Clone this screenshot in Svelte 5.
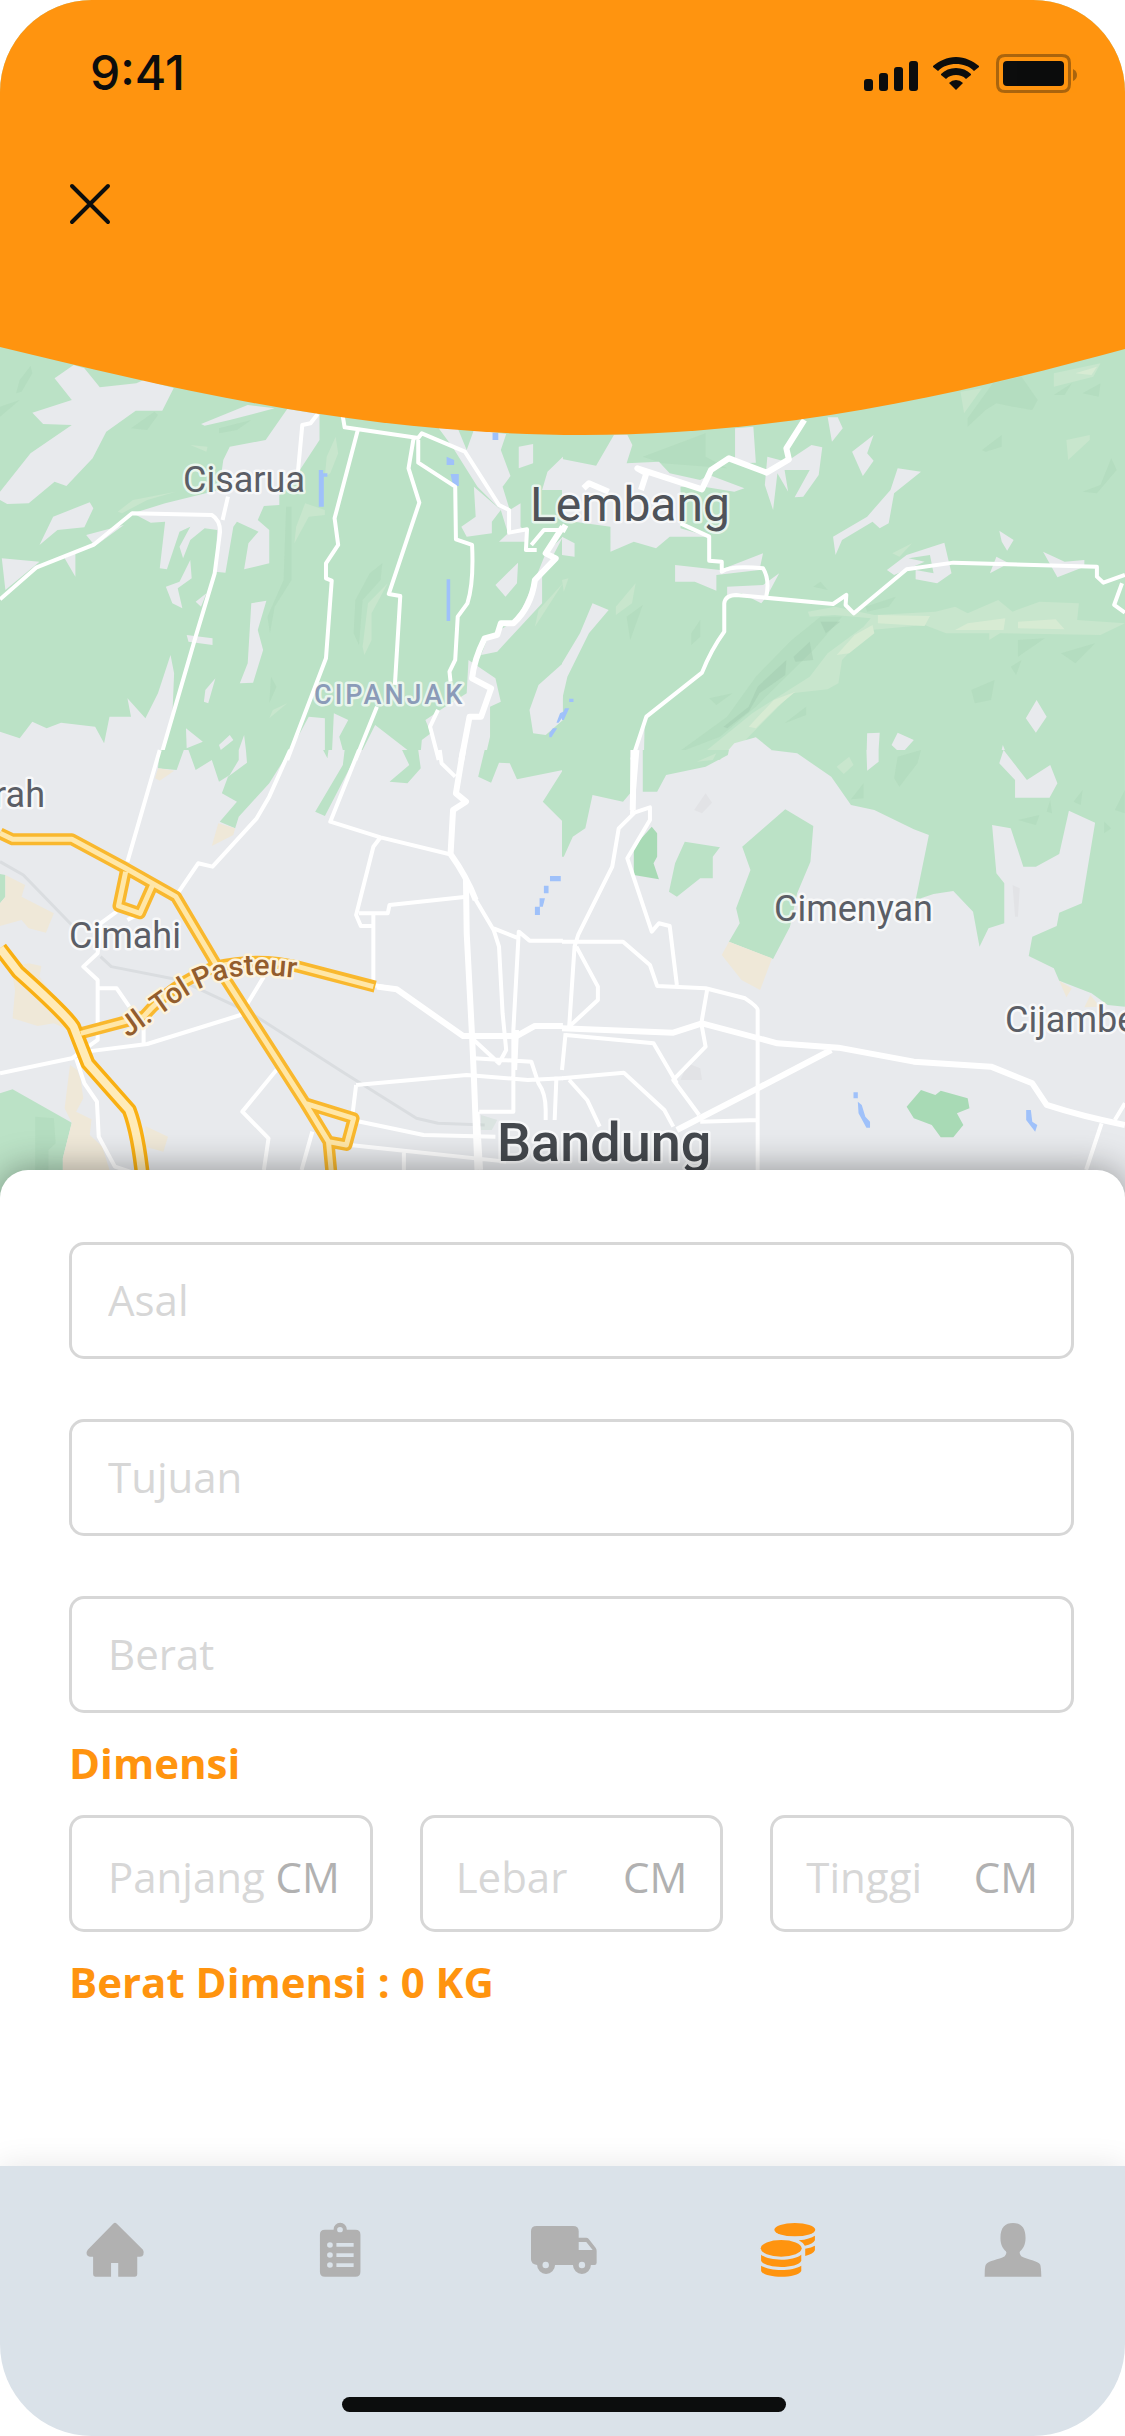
<script>
  let asal = $state('');
  let tujuan = $state('');
  let berat = $state('');
  let panjang = $state('');
  let lebar = $state('');
  let tinggi = $state('');

  // Volumetric weight: cubic centimetres divided by 6000
  const beratDimensi = $derived(
    Math.ceil(((Number(panjang) || 0) * (Number(lebar) || 0) * (Number(tinggi) || 0)) / 6000)
  );
</script>

<div class="screen">
  <section class="hero">
    <svg class="map" viewBox="0 0 1125 1200" role="img" aria-label="Peta Bandung">
      <rect class="land" width="1125" height="1200" />
      <rect class="green" width="1125" height="750" />

      <!-- north-west quarter -->
      <g transform="translate(0 340) scale(.359 .3333)">
        <path class="shade" d="M85 78L90 100L60 155L45 160L55 120zM0 200L55 180L0 230zM365 265L430 215L440 225L410 270zM610 265L700 240L660 270L610 280zM797 500L812 500L812 720L765 800L752 880L745 830L790 720zM1065 670L1060 720L1010 780L1000 915L985 880L990 780L1030 700zM755 1010L770 1040L750 1090z" />
        <path class="light" d="M328 515L370 480L490 455L410 480L340 520zM935 290L942 340L920 400L905 410L910 350zM850 490L905 510L905 525L860 530L820 610L825 560zM1080 730L1035 820L1035 900L1015 945L1010 920L1025 790zM800 1090L750 1135L760 1110zM530 315L578 320L575 335zM1568 730L1490 860L1500 810z" />
        <path class="land" d="M205 75L235 85L278 142L380 130L400 120L484 144L452 212H378L296 275L258 355L185 438L152 425L80 490L20 492L0 480V455L85 340L200 255L120 252L90 218L200 180L152 115z" />
        <path class="land" d="M560 252L690 195L765 205L640 240L570 257zM800 207L890 222V300L832 395L830 420L778 465V495L735 498L718 540L750 570V670L680 688L692 610L720 575L660 545L650 560L628 698L600 695L605 570L570 565L530 600L510 655L500 620L530 560L500 575L465 688L445 685L460 545L420 548L370 520L460 490L610 450L622 360L640 320L740 300z" />
        <path class="land" d="M148 530L250 487L260 505L235 562L160 570L110 615zM240 585L345 555L265 618zM5 655L110 665L15 750zM180 655L210 640V710zM530 660L534 715L495 745L508 805L480 790L462 740L500 725zM575 760L560 800L545 785zM700 790L742 782L718 870L733 930L705 1028L668 1030L690 970zM520 885L592 895V915L525 905zM600 1015L580 1090L568 1085L572 1050zM1222 265H1275L1300 330L1320 270L1410 282L1395 330L1422 408L1400 440L1420 510L1450 490V560L1465 575V605H1390L1415 580L1395 510L1330 440L1260 320zM1320 440L1395 510L1370 545V580L1300 590L1285 560L1325 530zM1445 320L1485 312V370L1445 385zM1568 350V450H1510L1525 395zM1443 668L1440 730L1408 770L1380 735zM1568 590L1510 710V790L1385 935L1340 945L1360 890L1440 840L1490 720L1520 640z" />
        <path class="land" d="M1568 970V1140L1520 1185L1485 1180L1475 1110L1500 1035zM1305 960L1380 1015L1395 1085L1365 1100V1190L1350 1260H1170L1175 1200L1200 1180L1185 1140L1240 1100L1300 1060zM0 1175L55 1195L90 1145L130 1165L170 1148L265 1160L290 1210L305 1130H365L355 1075L405 1135L440 1060L475 945L485 1000L480 1130L450 1230H0zM860 1130L905 1135V1230H810zM930 1120L970 1140L945 1190L955 1230H925zM1045 1155L1135 1230H1010zM518 1165L565 1205L520 1225zM640 1185L650 1200L615 1230L610 1215zM680 1185L685 1230H665z" />
        <path class="water" d="M888 390H900V400H912V410H902V500H888zM1244 718H1254V843H1244zM1372 278H1388V300H1372zM1244 350L1265 360V375H1244zM1255 402H1278V438H1262zM1560 1120L1568 1115V1130L1556 1148H1550zM1540 1165H1552L1536 1192H1530V1180z" />
        <g class="road">
          <path d="M0 778L102 682L260 615L368 520L590 525Q613 540 613 575L598 700L545 890L445 1260M635 470L620 540M830 395L842 255L865 250L885 222" />
          <path d="M955 230L960 262L1165 294L1175 280L1295 335L1390 495L1418 510V578L1468 568L1465 630H1495M998 265L932 535L942 615L908 670V715L924 722L908 955L800 1260M1152 295L1138 385L1168 488L1083 762L1115 768L1100 1035M1165 300V368L1268 440L1270 598L1315 615Q1320 730 1302 790L1275 830L1268 960L1252 995L1255 1025M1050 1100L990 1260M1220 1110L1198 1160L1222 1260M1480 615L1515 570H1560" />
        </g>
        <path class="road major" d="M1568 560L1520 640L1548 655L1490 720Q1480 800 1430 850L1395 850L1385 885L1350 895Q1320 960 1315 1015L1368 1045L1340 1130H1308L1285 1260" />
      </g>

      <!-- north-east quarter -->
      <g transform="translate(562 340) scale(.359 .3333)">
        <path class="shade" d="M1280 110L1325 180L1310 210L1255 200L1210 190L1180 210L1130 260L1130 235L1200 130zM1370 165L1420 130L1400 165zM1450 160L1500 130L1495 170zM225 350L400 280V350L460 385L280 370zM1170 330L1225 285V320L1180 335zM1530 355L1545 390L1490 460L1450 455L1500 435zM180 830L225 795L190 900zM360 880L385 840V890L360 915zM410 1075L475 1060L430 1095zM620 1150L680 1100V1125zM1270 900L1345 895L1270 950zM1390 940L1485 910L1430 970zM1250 980L1280 960L1265 1005zM1140 1050L1205 1020L1195 1080L1150 1090zM700 740L720 725L740 750zM845 800L930 770L910 800L850 815zM320 1240L460 1130L540 1010L640 900L720 830H780L700 930L540 1100L440 1190z" />
        <path class="light" d="M1370 100L1500 70L1480 110L1370 140zM1110 155L1170 145L1120 220zM1405 300L1470 285V300L1410 360zM205 730L195 790L150 825L150 800zM920 640L975 610L940 650zM0 720L18 715L5 755z" />
        <path class="deep" d="M720 845H775L735 880zM690 905L700 960L650 965L645 950zM625 960L622 1005L550 1060L520 1115L460 1165L450 1160L520 1100L545 1040z" />
        <path class="light" d="M685 815L760 800L870 825L1040 815L1095 800L1130 820L1215 780L1255 815L1330 785L1440 790L1435 840L1568 850L1500 885L1220 880L1190 900V880H1070L1010 855L860 870L780 960L770 1030L740 1048L640 1060L520 1190L460 1260H370L530 1120L690 1010L740 940L840 860L860 835L760 825L690 830z" />
        <path class="sand-green" d="M880 825L1025 828L1010 858L880 850zM865 855L870 880L800 940L765 945L815 885zM650 1055L600 1100L540 1165L520 1160L590 1080zM1130 850L1235 835L1230 870H1095zM1270 845L1375 838L1400 868L1270 865zM1430 100L1490 80L1475 105z" />
        <path class="land" d="M145 284H182L196 315L180 370L270 365L300 400L385 420L410 405L508 445L480 455L395 440L330 440L330 565L410 590L330 590L300 590L262 625L200 605L135 635V560L0 540V357L95 377zM482 265L533 260L540 368L482 370zM740 232H768L782 265L752 305zM572 350L625 365L695 315L725 322L715 405L672 470L648 472L690 390H620L630 455L600 400L588 510L565 435zM868 285L850 340L868 362L838 408L808 335zM935 385L1000 395L925 460L910 550L885 565L865 545L780 600L762 645L755 590L850 530L915 450z" />
        <path class="land" d="M1218 572L1258 600L1240 632L1225 605zM315 675L440 690L560 640L550 690L430 705V752L370 725H315zM460 740L560 735L605 700L570 770L555 790L500 760L460 765zM905 690L960 645L1065 608L1085 700L1045 730L985 718V690L1035 700L1025 645L965 655L1010 665L925 705zM1340 635L1400 665L1455 660V680L1380 712zM1210 650L1245 670L1192 700zM85 790L130 810L75 880L15 1010L0 1080V970L50 880zM1322 1080L1350 1130L1320 1178L1292 1135zM850 1180L885 1178L880 1260H848zM935 1178L980 1200L945 1242L918 1215zM480 1210L540 1192L590 1235L655 1238L680 1260H440zM1228 1215L1245 1260H1218zM0 590L35 610V650L0 645zM230 1160L228 1260H195z" />
        <path class="water" d="M0 1125L8 1105H20L5 1140H0zM20 1076H32V1086H20z" />
        <g class="road">
          <path d="M330 550L410 590V662L445 665V695Q470 675 560 685Q580 720 568 775M195 1260L235 1130L390 998Q415 930 452 875V790Q455 765 485 765L755 792L792 765L790 795L813 820L960 688L1090 668L1490 680V710L1508 728L1568 705M1560 730L1538 795L1568 818" />
        </g>
        <path class="road major" d="M0 575L10 555M60 445L75 430L130 455M220 450L235 400L210 385L390 448L415 390L465 355L570 398L632 358L625 325L675 240" />
      </g>

      <!-- south-west quarter -->
      <g transform="translate(0 750) scale(.359 .3333)">
        <path class="green" d="M445 0H512L492 60L440 55zM525 0H665V30L640 75L610 95L590 30L545 60zM685 0H808L750 100L665 200L655 235L612 215L660 155L618 130L635 80L688 38zM900 0H915L912 25zM960 0H1000L905 198L878 185L955 45zM1120 0H1165L1172 55L1135 100L1085 95L1140 45zM1350 0H1568V60L1440 88L1420 40L1390 38L1368 98L1332 80zM1568 60V215L1512 155zM0 372L15 375V440L0 460zM0 1030L35 1018L200 1118L175 1225V1350H0z" />
        <path class="sand" d="M440 55L485 62L445 92L432 85zM608 220L655 235L650 255L590 288zM15 375L70 405L60 440L150 490L128 548L80 535L60 510L0 528V460L15 440zM30 650L80 640L115 648L110 680L190 800L180 835L150 820L105 828L35 805L42 720zM195 945L215 960L225 990L232 1045L212 1085L255 1108L250 1155L285 1190L305 1260L250 1350H175V1225L200 1118L180 1075zM405 1128L468 1160L455 1205L405 1190z" />
        <path class="rail" d="M0 335L65 375L200 525M280 620L310 650L500 690L700 790L960 970L1160 1105L1220 1120L1350 1125" />
        <path class="shade" d="M98 1100L150 1105L155 1180L135 1200V1260H98zM1340 1095L1385 1110L1370 1140H1340z" />
        <g class="road">
          <path d="M445 0L355 335M808 0L750 140L715 205L592 350L552 340L495 430M1000 0L920 215L1060 262L1250 312M1060 262L1040 290L992 495L1005 528H1040V490L1000 490M1030 490H1080L1085 465L1300 440M1040 520V705L1105 718" />
          <path d="M325 485L280 520L272 610L232 650L272 690V870L200 925L0 970M275 715H325L360 770M240 905L410 882L670 795L735 680M400 880V820M212 925L235 1000L270 1055L275 1160L320 1250L390 1275M770 960L675 1085L748 1165L735 1260M355 510L390 490M1225 0L1230 40L1268 80M992 1005L1300 975L1470 990L1568 985M992 1005L980 1110L1180 1155L1380 1160M870 1145L840 1260M975 1185L1410 1235M1125 1205V1270M1320 925L1480 935L1500 1000Q1520 1030 1520 1080V1110M1335 1085H1430V840L1445 545L1475 572H1568M1320 870L1390 940L1410 900L1400 790L1390 590L1375 540L1320 440M1375 535L1445 565M1440 840L1435 960M1330 1085L1340 1260M1545 1110L1550 980" />
        </g>
        <path class="road major" d="M1290 0L1270 130L1298 155L1262 180L1255 312Q1300 380 1325 450M1298 390L1300 550L1315 860L1320 980L1330 1260M1050 710L1105 718L1290 858H1440L1490 828H1568" />
        <g class="toll-edge">
          <path d="M0 250L35 268H200L345 352L490 440L600 640L850 1060L985 1105L965 1185L915 1175L850 1060M350 365L330 468L390 490L425 405M915 1175L925 1290M225 850L400 800Q480 700 600 650Q720 620 830 650L1045 710" />
          <path class="wide" d="M0 595L50 665Q180 790 205 830L245 940L360 1080Q385 1150 398 1290" />
        </g>
        <g class="toll">
          <path d="M0 250L35 268H200L345 352L490 440L600 640L850 1060L985 1105L965 1185L915 1175L850 1060M350 365L330 468L390 490L425 405M915 1175L925 1290M225 850L400 800Q480 700 600 650Q720 620 830 650L1040 710" />
          <path class="wide" d="M0 595L50 665Q180 790 205 830L245 940L360 1080Q385 1150 398 1290" />
        </g>
        <path class="water" d="M1532 378H1562V394H1532zM1515 407H1528V430H1515zM1503 445H1518L1512 470H1503zM1490 470H1504V495H1490z" />
      </g>

      <!-- south-east quarter -->
      <g transform="translate(562 750) scale(.359 .3333)">
        <path class="green" d="M0 0H190V130L170 155L85 135L65 235L30 260L5 320H0zM225 0H465L462 15L400 50L290 75L265 125H225zM580 0H1568V770L1520 765L1475 730L1385 692L1370 655L1300 618L1310 560L1378 528L1385 488L1448 460L1485 218L1412 182L1385 312L1320 350H1285L1250 235L1198 225L1210 370L1232 400V520L1188 535L1163 590L1145 485L1090 423L1035 432L985 450L1022 255L980 238L870 180L805 165L750 80L655 10zM622 178L700 228L692 335L655 430L635 530L588 627L465 575L495 520L485 475L525 360L502 290zM342 275L440 292L420 320V385L385 385L320 440L298 425L315 340z" />
        <path class="park" d="M250 230L265 250V320L255 340L270 388L200 375V290zM960 1070L1000 1020L1040 1035L1055 1022L1130 1045L1135 1075L1100 1090L1118 1125L1090 1162H1055L1030 1125L980 1105z" />
        <path class="land" d="M848 0H882V35L850 62zM1230 0L1295 90L1360 45L1380 100L1358 143H1262V90L1218 40z" />
        <path class="sand" d="M465 575L585 625L552 720L500 690L445 615zM1385 692L1420 715L1405 742zM1472 735L1498 770L1455 772z" />
        <path class="shade" d="M935 20L1000 0L990 40L940 110L925 85zM840 100V145L805 148zM1450 120L1445 165L1425 155zM1360 150L1365 190L1350 185zM1270 210L1330 195L1320 225zM1540 180L1568 120V190zM1510 215L1530 235L1510 250z" />
        <path class="light" d="M800 20L812 45L785 72L765 50zM430 10L420 30L375 35z" />
        <path class="built" d="M400 130L418 158L390 190L368 180zM350 940L385 955L390 990H330zM1255 405L1275 415L1270 500H1262z" />
        <g class="road">
          <path d="M210 0L195 190L245 172V210L182 325L250 545L270 520L300 528L320 705M205 185L158 235L140 350L45 555L35 590L20 830M0 575H170L245 645L265 708L400 715L510 745Q545 770 545 780V1260M40 590L100 710V750L20 830M405 715L388 820L400 890L310 990L382 1095M10 855L255 880L320 1000M0 985L172 968L285 1080L310 1130M20 990L70 1050L105 1130M385 1115L545 1110M1568 1060L1540 1110M1503 1120L1460 1260M10 850L0 960" />
        </g>
        <path class="road major" d="M200 0L197 180M0 835L310 848L390 820L600 880L770 893L980 935L1195 950L1310 1000L1350 1065Q1450 1100 1568 1125M750 900L545 1015L320 1140" />
        <path class="water" d="M812 1027H824V1045H812zM824 1055L835 1065L845 1100L858 1115V1133H848L826 1090zM1293 1080H1306L1310 1115L1324 1125L1318 1145L1293 1110z" />
      </g>

      <text class="town" x="183" y="492">Cisarua</text>
      <text class="city" x="530" y="521">Lembang</text>
      <text class="district" x="314" y="704">CIPANJAK</text>
      <text class="town" x="45" y="807" text-anchor="end">rah</text>
      <text class="town" x="69" y="948">Cimahi</text>
      <text class="town" x="774" y="921">Cimenyan</text>
      <text class="town" x="1005" y="1032">Cijambe</text>
      <text class="capital" x="497" y="1161">Bandung</text>
      <path id="tol-pasteur" fill="none" d="M128 1038L166 1011Q205 980 240 976Q265 972 340 984" />
      <text class="street"><textPath href="#tol-pasteur">Jl. Tol Pasteur</textPath></text>
    </svg>

    <svg class="curve" viewBox="0 0 1125 440" aria-hidden="true">
      <path fill="#ff940f" d="M0 0H1125V349C980 388 796 435 583 435C370 435 180 391 0 347z" />
    </svg>

    <header>
      <div class="status">
        <time>9:41</time>
        <svg width="213" height="39" viewBox="0 0 213 39" aria-hidden="true">
          <g fill="#0c0d0d">
            <rect x="0" y="25" width="9" height="12" rx="3" />
            <rect x="15" y="19" width="9" height="18" rx="3" />
            <rect x="30" y="13" width="9" height="24" rx="3" />
            <rect x="45" y="7" width="9" height="30" rx="3" />
            <path d="M92 3C101 3 109 7 115 12V13L110 17C105 12 99 10 92 10C85 10 79 12 74 17L69 13V12C75 7 83 3 92 3z" />
            <path d="M92 14C98 14 103 16 107 20V21L102 25C99 22 96 21 92 21C88 21 85 22 82 25L77 21V20C81 16 86 14 92 14z" />
            <path d="M92 26Q96 26 99 29L92 36L85 29Q88 26 92 26z" />
            <rect x="139" y="7" width="61" height="25" rx="4" />
          </g>
          <g opacity=".35">
            <path fill="#0c0d0d" fill-rule="evenodd" d="M141 0H198Q207 0 207 9V30Q207 39 198 39H141Q132 39 132 30V9Q132 0 141 0zM141 3Q135 3 135 9V30Q135 36 141 36H198Q204 36 204 30V9Q204 3 198 3z" />
            <path fill="#0c0d0d" d="M209 15Q213 17 213 21T209 27z" />
          </g>
        </svg>
      </div>
      <button class="close" type="button" aria-label="Tutup">
        <svg width="42" height="42" viewBox="0 0 42 42" fill="none" stroke="#0c0d0d" stroke-width="4" stroke-linecap="round">
          <path d="M3 3L39 39M39 3L3 39" />
        </svg>
      </button>
    </header>
  </section>

  <form class="sheet">
    <div class="fields">
      <input type="text" placeholder="Asal" aria-label="Asal" bind:value={asal} />
      <input type="text" placeholder="Tujuan" aria-label="Tujuan" bind:value={tujuan} />
      <input type="text" placeholder="Berat" aria-label="Berat" bind:value={berat} />
    </div>
    <h2>Dimensi</h2>
    <div class="dims">
      <label class="dim">
        <input type="text" inputmode="numeric" placeholder="Panjang" aria-label="Panjang" bind:value={panjang} />
        <span>CM</span>
      </label>
      <label class="dim">
        <input type="text" inputmode="numeric" placeholder="Lebar" aria-label="Lebar" bind:value={lebar} />
        <span>CM</span>
      </label>
      <label class="dim">
        <input type="text" inputmode="numeric" placeholder="Tinggi" aria-label="Tinggi" bind:value={tinggi} />
        <span>CM</span>
      </label>
    </div>
    <h2>Berat Dimensi : {beratDimensi} KG</h2>
  </form>

  <nav>
    <a href="#beranda" aria-label="Beranda">
      <svg viewBox="225 273 184 174" preserveAspectRatio="none">
        <path d="M312 281Q317 276 322 281L395 359Q399 367 396 374Q394 380 387 380H379V433Q379 440 373 440H326V399H306V440H262Q256 440 256 433V380H247Q240 380 238 373Q236 366 241 359z" />
      </svg>
    </a>
    <a href="#pesanan" aria-label="Pesanan">
      <svg viewBox="852 273 184 174" preserveAspectRatio="none">
        <path fill-rule="evenodd" d="M902 299H926A18 20 0 0 1 963 299H987Q1001 299 1001 314V425Q1001 440 987 440H902Q888 440 888 425V314Q888 299 902 299zM936 299A8 8 0 0 0 952 299A8 8 0 0 0 936 299zM908 345A8 8 0 0 0 924 345A8 8 0 0 0 908 345zM908 375A8 8 0 0 0 924 375A8 8 0 0 0 908 375zM908 405A8 8 0 0 0 924 405A8 8 0 0 0 908 405zM934 339V350H982V339zM934 370V381H982V370zM934 400V411H982V400z" />
      </svg>
    </a>
    <a href="#pengiriman" aria-label="Pengiriman">
      <svg viewBox="-86 273 184 174" preserveAspectRatio="none">
        <path fill-rule="evenodd" d="M-70 288H31Q47 288 47 304V323H68Q72 323 75 327L94 353Q97 357 97 363V398Q97 405 91 405H81A25 27 0 0 1 31 405H-19A25 27 0 0 1 -69 405Q-86 403 -86 388V304Q-86 288 -70 288zM47 336V360H86L68 336zM-54 405A9 10 0 0 0 -36 405A9 10 0 0 0 -54 405zM47 405A9 10 0 0 0 65 405A9 10 0 0 0 47 405z" />
      </svg>
    </a>
    <a class="active" href="#tarif" aria-label="Cek tarif" aria-current="page">
      <svg viewBox="540 273 184 174" preserveAspectRatio="none">
        <ellipse cx="651" cy="299" rx="57" ry="20" />
        <ellipse cx="613" cy="355" rx="57" ry="25" />
        <path d="M557 374C580 394 646 394 669 374V392C660 417 566 417 557 392zM557 407C580 424 646 424 669 407V423C660 446 566 446 557 423zM662 331Q694 327 707 317V331Q702 343 679 347Q674 338 662 331zM680 356Q698 353 707 347V361Q703 372 680 378z" />
      </svg>
    </a>
    <a href="#akun" aria-label="Akun">
      <svg viewBox="1167 273 184 174" preserveAspectRatio="none">
        <path d="M1259 279C1281 279 1294 292 1294 324C1294 344 1287 356 1279 364Q1275 369 1282 379C1300 389 1329 393 1335 404Q1337 409 1338 440H1180Q1180 409 1183 404C1190 392 1220 389 1236 379Q1243 369 1239 364C1231 356 1224 344 1224 324C1224 292 1237 279 1259 279z" />
      </svg>
    </a>
  </nav>
  <div class="home-area"><span></span></div>
</div>

<style>
  :global(body) {
    background: #fff;
  }
  .screen {
    display: flex;
    flex-direction: column;
    min-height: 100vh;
    overflow: hidden;
    border-radius: 92px;
    background: #fff;
    font-family: 'Open Sans', sans-serif;
  }
  .hero {
    display: grid;
  }
  .hero > * {
    grid-area: 1 / 1;
    min-width: 0;
  }
  .map,
  .curve {
    display: block;
    width: 100%;
  }
  .land { fill: #e8eaed; }
  .green { fill: #bbe2c6; }
  .park { fill: #a8dab5; }
  .shade { fill: #8fbc9c; opacity: .14; }
  .deep { fill: #8fb49c; opacity: .22; }
  .light { fill: #c8e6cd; }
  .sand-green { fill: #d7ebd3; }
  .sand { fill: #efe8d8; }
  .built { fill: #e2e3e6; }
  .water { fill: #9fc1fa; }
  .road path,
  .road,
  .rail,
  .toll path,
  .toll-edge path {
    fill: none;
    stroke-linejoin: round;
    vector-effect: non-scaling-stroke;
  }
  .road { stroke: #fff; stroke-width: 4px; }
  .road.major { stroke-width: 6px; }
  .rail { stroke: #dadde0; stroke-width: 3px; }
  .toll-edge { stroke: #f9b82e; stroke-width: 12px; }
  .toll-edge .wide { stroke: #f9b013; stroke-width: 15px; }
  .toll { stroke: #ffe7a8; stroke-width: 5px; }
  .toll .wide { stroke: #ffebb8; stroke-width: 8px; }
  .map text {
    font-family: Roboto, sans-serif;
    paint-order: stroke;
    stroke: rgba(255, 255, 255, .7);
    stroke-width: 5px;
    stroke-linejoin: round;
    fill: #5b5e66;
  }
  .map .town { font-size: 36px; }
  .map .city { font-size: 48px; fill: #4f5359; }
  .map .capital { font-size: 54px; font-weight: 500; fill: #45494e; }
  .map .district { font-size: 27px; font-weight: 500; letter-spacing: 3px; fill: #8b9bb8; }
  .map .street { font-size: 29px; font-weight: 500; fill: #935d2d; stroke: #fdf3dc; }

  header {
    position: relative;
    align-self: start;
    display: flex;
    flex-direction: column;
    align-items: flex-start;
    gap: 80px;
    padding: 43px 0 0 69px;
  }
  .status {
    align-self: stretch;
    display: flex;
    align-items: center;
    justify-content: space-between;
    padding: 0 48px 0 21px;
  }
  time {
    font: 500 48px/60px Inter, sans-serif;
    color: #0c0d0d;
  }
  .status svg,
  .close svg {
    display: block;
  }
  .close {
    padding: 0;
    border: 0;
    background: none;
    cursor: pointer;
  }

  .sheet {
    position: relative;
    flex: 1;
    margin-top: -30px;
    padding: 72px 51px 0 69px;
    border-radius: 28px 28px 0 0;
    background: #fff;
    box-shadow: 0 0 36px rgba(0, 0, 0, .4);
  }
  .fields {
    display: grid;
    gap: 60px;
  }
  input {
    box-sizing: border-box;
    width: 100%;
    min-width: 0;
    font: 400 42px/56px 'Open Sans', sans-serif;
    color: #555;
    background: none;
    outline: none;
  }
  input::placeholder {
    color: #d7d7d7;
    opacity: 1;
  }
  .fields input,
  .dim {
    box-sizing: border-box;
    height: 117px;
    border: 3px solid #d7d7d7;
    border-radius: 15px;
  }
  .fields input {
    padding: 0 36px 3px;
  }
  h2 {
    margin: 22px 0 24px;
    font-size: 42px;
    line-height: 56px;
    font-weight: 700;
    color: #ff940f;
  }
  .dims {
    display: grid;
    grid-template-columns: repeat(3, 1fr);
    gap: 47px;
  }
  .dim {
    display: flex;
    align-items: center;
    padding: 6px 33px 0;
  }
  .dim:first-child {
    padding: 6px 30px 0 36px;
  }
  .dim input {
    flex: 1;
    height: 60px;
    padding: 0;
    border: 0;
  }
  .dim span {
    font-size: 42px;
    line-height: 56px;
    color: #b1b1b1;
  }

  nav {
    position: relative;
    display: grid;
    grid-template-columns: repeat(5, 1fr);
    height: 168px;
    padding-left: 3px;
    background: #dae2e9;
    box-shadow: 0 0 30px rgba(0, 0, 0, .1);
  }
  nav a {
    display: flex;
    justify-content: center;
    padding-top: 55px;
    fill: #b1b1b1;
  }
  nav a.active {
    fill: #ff940f;
  }
  nav svg {
    width: 66px;
    height: 58px;
  }
  .home-area {
    position: relative;
    display: flex;
    justify-content: center;
    padding: 63px 0 24px 3px;
    background: #dae2e9;
  }
  .home-area span {
    width: 444px;
    height: 15px;
    border-radius: 8px;
    background: #0c0d0d;
  }
</style>
